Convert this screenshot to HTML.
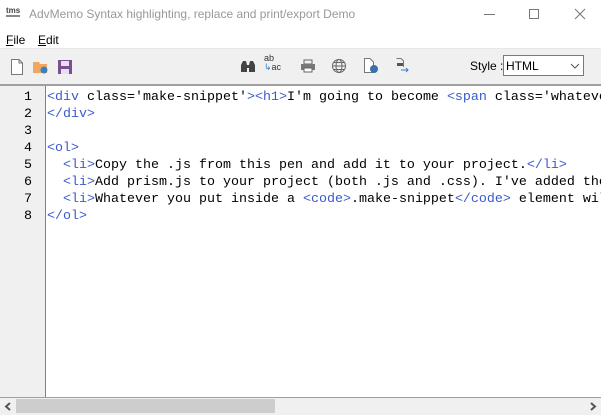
<!DOCTYPE html>
<html><head><meta charset="utf-8"><style>
*{margin:0;padding:0;box-sizing:border-box}
body{width:601px;height:415px;overflow:hidden;background:#fff;font-family:"Liberation Sans",sans-serif;position:relative}
.abs{position:absolute}
.title{top:0;left:0;width:601px;height:30px;background:#fff}
.title .t{left:29px;top:7px;font-size:12px;color:#999;white-space:nowrap}
.menu{top:30px;left:0;height:18px;font-size:12px;color:#000}
.menu span{position:absolute;top:3px;white-space:nowrap}
.tb{top:48px;left:0;width:601px;height:36px;background:#f0f0f0;border-top:1px solid #e8e8e8}
.edit{top:84px;left:0;width:601px;height:314px;border-top:2px solid #a0a0a0;background:#fff}
.gut{left:0;top:0;width:46px;height:312px;background:#f0f0f0;border-right:1px solid #808080}
.code{font-family:"Liberation Mono",monospace;font-size:13.33px;line-height:17px;white-space:pre}
.num{text-align:right;color:#000}
.txt{left:47px;top:3px;color:#000}
.k{color:#3a5ad0}
.sb{top:397px;left:0;width:601px;height:18px;background:#f0f0f0;border-top:1px solid #a0a0a0}
</style></head><body>
<div class="abs title">
 <div class="abs" style="left:6px;top:6px;font-size:8px;color:#444;font-weight:bold">tms</div>
 <div class="abs" style="left:6px;top:15px;width:14px;height:2px;background:#888"></div>
 <div class="abs t">AdvMemo Syntax highlighting, replace and print/export Demo</div>
 <div class="abs" style="left:484px;top:14px;width:11px;height:1px;background:#777"></div>
 <div class="abs" style="left:529px;top:9px;width:10px;height:10px;border:1px solid #777"></div>
 <svg class="abs" style="left:574px;top:8px" width="12" height="12"><path d="M1 1L11 11M11 1L1 11" stroke="#777" stroke-width="1"/></svg>
</div>
<div class="abs menu"><span style="left:6px"><u>F</u>ile</span><span style="left:38px"><u>E</u>dit</span></div>
<div class="abs tb">
 <svg class="abs" style="left:10px;top:10px" width="14" height="16"><path d="M1.5 .5H9L12.5 4V15.5H1.5Z" fill="#fff" stroke="#777"/><path d="M9 .5V4H12.5" fill="none" stroke="#777"/></svg>
 <svg class="abs" style="left:32px;top:10px" width="18" height="16"><path d="M1 3H7L8 5H15V14H1Z" fill="#f0a860"/><circle cx="12" cy="11" r="3.5" fill="#3a80c0"/></svg>
 <svg class="abs" style="left:57px;top:10px" width="16" height="16"><rect x="1" y="1" width="14" height="14" fill="#7a5090"/><rect x="4" y="2" width="8" height="5" fill="#e8e0f0"/><rect x="4" y="10" width="8" height="5" fill="#e8e0f0"/></svg>
 <svg class="abs" style="left:240px;top:10px" width="16" height="14"><path d="M1 13V6L3 2H6L7 6V13ZM9 13V6L10 2H13L15 6V13Z" fill="#444"/><rect x="6" y="6" width="4" height="3" fill="#444"/></svg>
 <div class="abs" style="left:264px;top:5px;font-size:9px;line-height:9px;color:#333">ab<br><span style="color:#3a80c0">↳</span>ac</div>
 <svg class="abs" style="left:300px;top:10px" width="16" height="14"><rect x="4" y="1" width="8" height="4" fill="none" stroke="#666"/><rect x="1" y="5" width="14" height="6" fill="#777"/><rect x="4" y="9" width="8" height="4" fill="#fff" stroke="#666"/></svg>
 <svg class="abs" style="left:331px;top:9px" width="16" height="16"><circle cx="8" cy="8" r="6.5" fill="none" stroke="#666"/><ellipse cx="8" cy="8" rx="3" ry="6.5" fill="none" stroke="#666"/><path d="M1.5 8H14.5M3 4.5H13M3 11.5H13" stroke="#666"/></svg>
 <svg class="abs" style="left:363px;top:9px" width="16" height="16"><path d="M1.5 .5H7L10.5 4V14.5H1.5Z" fill="#fff" stroke="#777"/><circle cx="11" cy="11" r="4" fill="#3a70b0"/></svg>
 <svg class="abs" style="left:395px;top:9px" width="16" height="16"><path d="M1.5 .5H6L8.5 3V9" fill="none" stroke="#777"/><rect x="2" y="5" width="6" height="3" fill="#555"/><path d="M6 12H13M11 10L13 12L11 14" stroke="#3a80c0" fill="none"/></svg>
 <div class="abs" style="left:470px;top:10px;font-size:12px">Style :</div>
 <div class="abs" style="left:503px;top:6px;width:81px;height:21px;border:1px solid #7a7a7a;background:#fff;font-size:12px;padding:3px 0 0 2px">HTML
  <svg class="abs" style="left:66px;top:7px" width="10" height="6"><path d="M1 1L5 5L9 1" fill="none" stroke="#555"/></svg></div>
</div>
<div class="abs edit">
 <div class="abs gut"></div>
 <div class="abs code num" style="top:3px;width:30px;left:2px">1
2
3
4
5
6
7
8</div>
 <div class="abs code txt"><span class="k">&lt;div</span> class='make-snippet'<span class="k">&gt;&lt;h1&gt;</span>I'm going to become <span class="k">&lt;span</span> class='whatever
<span class="k">&lt;/div&gt;</span>

<span class="k">&lt;ol&gt;</span>
  <span class="k">&lt;li&gt;</span>Copy the .js from this pen and add it to your project.<span class="k">&lt;/li&gt;</span>
  <span class="k">&lt;li&gt;</span>Add prism.js to your project (both .js and .css). I've added these
  <span class="k">&lt;li&gt;</span>Whatever you put inside a <span class="k">&lt;code&gt;</span>.make-snippet<span class="k">&lt;/code&gt;</span> element will
<span class="k">&lt;/ol&gt;</span></div>
</div>
<div class="abs sb">
 <svg class="abs" style="left:4px;top:4px" width="8" height="9"><path d="M6 1L2 4.5L6 8" fill="none" stroke="#555" stroke-width="2"/></svg>
 <div class="abs" style="left:16px;top:1px;width:259px;height:14px;background:#cdcdcd"></div>
 <svg class="abs" style="left:589px;top:4px" width="8" height="9"><path d="M2 1L6 4.5L2 8" fill="none" stroke="#555" stroke-width="2"/></svg>
</div>
</body></html>
